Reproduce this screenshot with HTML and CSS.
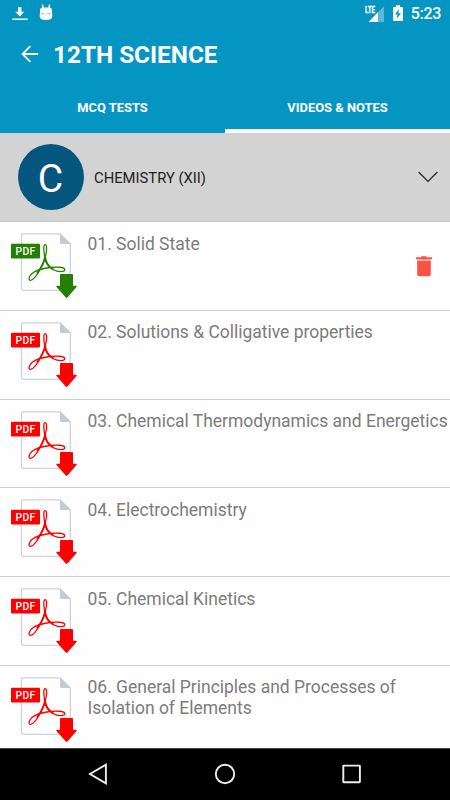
FILE: index.html
```html
<!DOCTYPE html>
<html lang="en">
<head>
    <meta charset="UTF-8">
    <meta name="viewport" content="width=device-width, initial-scale=1.0">
    <title>12th Science</title>
    <link rel="stylesheet" href="styles.css">
</head>
<body>
    <svg class="sprite">
        <symbol id="pdf" viewBox="0 0 70 70">
            <path d="M13.3 3.8H50L60.3 14V60.3H13.3Q11.5 60.3 11.5 58.5V5.6Q11.5 3.8 13.3 3.8Z" fill="#fefefe" stroke="#ced3dc" stroke-width="1.3"/>
            <path d="M50 3.3L60.8 14H51.5Q50 14 50 12.5Z" fill="#c4cad4"/>
            <path d="M35.1 14.6C32.9 14.6 34 23 34.8 27.3C35.3 31.5 38.5 36.7 43.5 39.7C48 42.2 54.8 42.2 54.8 39.8C54.8 37 46.5 36.6 40 37.5C33 38.3 25.5 40.6 22 43.6C18.5 46.6 18.3 50.5 20.4 50.4C23.5 50.2 28.4 43 31.6 36.5C34 31.8 35.8 26.6 36.4 21.5C36.9 17.2 36.5 14.6 35.1 14.6Z" fill="none" stroke="currentColor" stroke-width="1.3"/>
            <path d="M35 25C35 31 38.5 36.7 43.5 39.7M34.9 27C34.4 31.5 31 38 27 43.5" fill="none" stroke="currentColor" stroke-width="1.8"/>
            <rect x="1" y="13.8" width="29" height="14.6" rx="1" fill="currentColor"/>
            <text class="pdf-text" x="15.3" y="24.6" text-anchor="middle" textLength="19.6">PDF</text>
            <path d="M50 45Q50 44 51 44H62Q63 44 63 45V55.8H66.2Q67.2 56 66.5 56.9L57.4 67.5Q56.6 68.4 55.8 67.5L46.5 56.9Q45.8 56 46.8 55.8H50Z" fill="currentColor"/>
        </symbol>
    </svg>

    <div class="screen">
        <header class="header">
            <div class="status">
                <svg class="download" width="16" height="16" viewBox="0 0 16 16" fill="#fff">
                    <path d="M6 1.2H9.5V5.8H12.2L7.8 10.6L3.3 5.8H6ZM0.3 12.6H15.7V14H0.3Z"/>
                </svg>
                <svg width="14" height="18" viewBox="0 0 14 18">
                    <path d="M3.3 0.5L4.6 5M10.7 0.5L9.4 5" stroke="#fff" stroke-width="1.3"/>
                    <path d="M3 3.6H11Q12.8 3.8 12.9 5.8L13.3 12.5Q13 16 7 16Q1 16 0.7 12.5L1.1 5.8Q1.2 3.8 3 3.6Z" fill="#fff"/>
                    <circle cx="3.8" cy="9.6" r="0.7" fill="#0595c3"/>
                    <circle cx="10.2" cy="9.6" r="0.7" fill="#0595c3"/>
                    <path d="M5.8 9.6L7 10.4L8.2 9.6" fill="none" stroke="#9dd3e8" stroke-width="0.8"/>
                </svg>
                <svg class="signal" width="20" height="18" viewBox="0 0 20 18">
                    <path d="M13.2 7V17H3.5Z" fill="#fff"/>
                    <path d="M19 1.5V17H13.2V7Z" fill="#5cbad9"/>
                    <text class="lte" x="0" y="8" textLength="10" lengthAdjust="spacingAndGlyphs">LTE</text>
                </svg>
                <svg class="battery" width="10" height="17" viewBox="0 0 10 17">
                    <path d="M3 0.3H7V2H9Q10 2 10 3V15Q10 16 9 16H1Q0 16 0 15V3Q0 2 1 2H3Z" fill="#fff"/>
                    <path d="M5.8 4L2 9.6H4.5L3.8 13.8L8 8.2H5.4Z" fill="#0595c3"/>
                </svg>
                <span class="time">5:23</span>
            </div>
            <div class="toolbar">
                <svg width="18" height="18" viewBox="0 0 18 18" fill="none" stroke="#fff" stroke-width="1.8">
                    <path d="M17.2 9H1.6M9.3 1.1L1.5 9L9.3 16.9"/>
                </svg>
                <h1 class="title">12TH SCIENCE</h1>
            </div>
            <nav class="tabs">
                <div class="tab">MCQ TESTS</div>
                <div class="tab active">VIDEOS &amp; NOTES</div>
            </nav>
        </header>

        <div class="subject">
            <div class="avatar">C</div>
            <span class="subject-name">CHEMISTRY (XII)</span>
            <svg class="chevron" width="20" height="12" viewBox="0 0 20 12" fill="none" stroke="#222" stroke-width="1.2">
                <path d="M0.6 1L10 10.4L19.4 1"/>
            </svg>
        </div>

        <div class="list">
            <div class="row">
                <svg class="pdf saved"><use href="#pdf"/></svg>
                <p class="name">01. Solid State</p>
                <svg class="trash" width="16" height="21" viewBox="0 0 16 21">
                    <path d="M1.2 3.4H14.8V18.3Q14.8 20.2 13 20.2H3Q1.2 20.2 1.2 18.3Z" fill="#fa5244"/>
                    <path d="M1.2 3.2H14.8V4.8H1.2Z" fill="#fdd0c9"/>
                    <path d="M0 1.2H5L5.8 0.2H10.2L11 1.2H16V3.2H0Z" fill="#fa5244"/>
                </svg>
            </div>
            <div class="row">
                <svg class="pdf"><use href="#pdf"/></svg>
                <p class="name">02. Solutions &amp; Colligative properties</p>
            </div>
            <div class="row">
                <svg class="pdf"><use href="#pdf"/></svg>
                <p class="name">03. Chemical Thermodynamics and Energetics</p>
            </div>
            <div class="row">
                <svg class="pdf"><use href="#pdf"/></svg>
                <p class="name">04. Electrochemistry</p>
            </div>
            <div class="row">
                <svg class="pdf"><use href="#pdf"/></svg>
                <p class="name">05. Chemical Kinetics</p>
            </div>
            <div class="row">
                <svg class="pdf"><use href="#pdf"/></svg>
                <p class="name">06. General Principles and Processes of Isolation of Elements</p>
            </div>
        </div>

        <footer class="navbar">
            <svg width="22" height="22" viewBox="0 0 22 22"><path d="M18.9 1.7V20.3L3 11Z"/></svg>
            <svg width="22" height="22" viewBox="0 0 22 22"><circle cx="11" cy="11" r="9.2"/></svg>
            <svg width="22" height="22" viewBox="0 0 22 22"><rect x="2.3" y="2.6" width="16.6" height="16.6" rx="0.5"/></svg>
        </footer>
    </div>
</body>
</html>
```

FILE: styles.css
```css
* {
    box-sizing: border-box;
}

body {
    margin: 0;
    font-family: Roboto, sans-serif;
    background-color: #fefefe;
    color: #7c7c7c;
}

.sprite {
    display: none;
}

.screen {
    display: flex;
    flex-direction: column;
    width: 450px;
    height: 800px;
    overflow: hidden;
}

.header {
    flex: none;
    height: 133px;
    background-color: #0595c3;
    color: #fff;
}

.status {
    display: flex;
    align-items: center;
    height: 26px;
    padding: 0 9px 0 12px;
}

.download {
    margin: 2px 11px 0 0;
}

.signal {
    margin: 2px 8px 0 auto;
}

.battery {
    margin: 1px 8px 0 0;
}

.time {
    font-size: 16px;
    font-weight: 500;
    line-height: 26px;
    margin-top: 2px;
    letter-spacing: -0.3px;
}

.lte {
    font-family: Roboto, sans-serif;
    font-size: 9px;
    font-weight: 700;
    fill: #fff;
    stroke: #fff;
    stroke-width: 0.3;
}

.toolbar {
    display: flex;
    align-items: center;
    gap: 14.5px;
    height: 56px;
    padding-left: 20.5px;
}

.title {
    margin: 1px 0 0;
    font-size: 24.3px;
    font-weight: 700;
}

.tabs {
    display: flex;
    height: 51px;
}

.tab {
    flex: 1;
    line-height: 51px;
    text-align: center;
    font-size: 12.9px;
    font-weight: 700;
}

.active {
    border-bottom: 4px solid #fff;
}

.subject {
    flex: none;
    display: flex;
    align-items: center;
    height: 89px;
    padding: 0 12px 0 17.5px;
    background-color: #d3d3d3;
    border-bottom: 1px solid #c8c8c8;
}

.avatar {
    width: 66px;
    height: 66px;
    border-radius: 50%;
    background-color: #04567f;
    color: #fff;
    font-size: 39px;
    line-height: 70px;
    text-align: center;
}

.subject-name {
    margin: 1px 0 0 10.5px;
    font-size: 14.8px;
    color: #222;
}

.chevron {
    margin-left: auto;
}

.list {
    flex: 1;
    overflow: hidden;
}

.row {
    display: flex;
    align-items: flex-start;
    height: 88.75px;
    padding: 8px 0 0 10px;
    border-bottom: 1px solid #ccc;
}

.pdf {
    flex: none;
    width: 70px;
    height: 70px;
    color: #fe0000;
}

.saved {
    color: #238000;
}

.pdf-text {
    font-family: Roboto, sans-serif;
    font-size: 10.3px;
    font-weight: 500;
    fill: #fff;
}

.name {
    flex: 1;
    margin: 3.6px 0 0 7.5px;
    font-size: 17.48px;
    line-height: 20.5px;
}

.trash {
    margin: 26px 18px 0 0;
}

.navbar {
    flex: none;
    display: flex;
    justify-content: center;
    align-items: center;
    gap: 105px;
    height: 52.5px;
    background-color: #000;
    border-top: 1px solid #444;
    fill: none;
    stroke: #eee;
    stroke-width: 1.9;
}
```
